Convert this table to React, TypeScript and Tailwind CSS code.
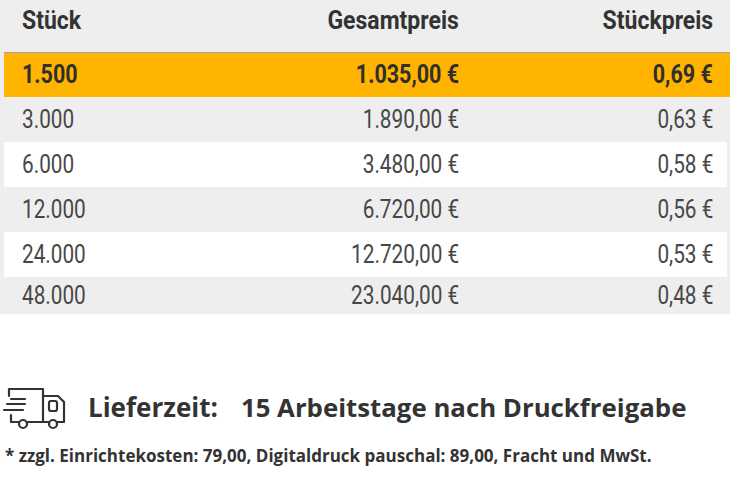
import React from 'react';

interface PriceRow {
  qty: string;
  total: string;
  unit: string;
}

const rows: PriceRow[] = [
  { qty: '1.500', total: '1.035,00 €', unit: '0,69 €' },
  { qty: '3.000', total: '1.890,00 €', unit: '0,63 €' },
  { qty: '6.000', total: '3.480,00 €', unit: '0,58 €' },
  { qty: '12.000', total: '6.720,00 €', unit: '0,56 €' },
  { qty: '24.000', total: '12.720,00 €', unit: '0,53 €' },
  { qty: '48.000', total: '23.040,00 €', unit: '0,48 €' },
];

const condensed = { fontFamily: 'Roboto, "Liberation Sans", sans-serif' };
const rounded = { fontFamily: '"Open Sans", "Noto Sans", sans-serif' };

function TruckIcon() {
  return (
    <svg width="66" height="46" viewBox="0 0 66 46" fill="none" stroke="#333" strokeWidth="2.2" strokeLinecap="round" strokeLinejoin="round">
      {/* cargo box */}
      <path d="M9 12V5h34v33" />
      {/* cab */}
      <path d="M43 12h15l6 6v20h-7" />
      <rect x="49" y="17" width="8" height="10" rx="2" />
      {/* bottom line between wheels */}
      <path d="M27 38h22" />
      <path d="M11 31v7h8" />
      {/* wheels */}
      <circle cx="23" cy="40" r="4" />
      <circle cx="53" cy="40" r="4" />
      {/* speed lines */}
      <path d="M11 15h14" />
      <path d="M7 20h18" />
      <path d="M4 26h19" />
    </svg>
  );
}

function Cell({ children, align, squeeze }: { children: React.ReactNode; align: 'left' | 'right'; squeeze: 'header' | 'bold' | 'normal' }) {
  const scale = squeeze === 'header' ? 'scale-x-[0.92]' : squeeze === 'bold' ? 'scale-x-[0.86]' : 'scale-x-[0.83]';
  return (
    <div className={align === 'left' ? 'text-left' : 'text-right'}>
      <span className={`inline-block whitespace-nowrap ${scale} ${align === 'left' ? 'origin-left' : 'origin-right'}`}>
        {children}
      </span>
    </div>
  );
}

export default function App() {
  return (
    <div className="w-[730px] h-[487px] overflow-hidden bg-white text-[#3a3a3a]">
      {/* Price table */}
      <div className="bg-[#eeeeee]">
        <div
          className="grid h-[52px] grid-cols-[200px_237px_254px] items-center pb-[10px] pl-[22px] text-[25px] font-bold text-[#333]"
          style={condensed}
        >
          <Cell align="left" squeeze="header">Stück</Cell>
          <Cell align="right" squeeze="header">Gesamtpreis</Cell>
          <Cell align="right" squeeze="header">Stückpreis</Cell>
        </div>

        {rows.map((row, index) => {
          const highlighted = index === 0;
          const bg = highlighted
            ? 'bg-[#ffb400] border-t border-[#9aa3ab] font-bold text-[#2f2f2f] mr-0'
            : index % 2 === 0
              ? 'bg-white text-[#474747] mr-[3px]'
              : 'bg-[#eeeeee] text-[#474747] mr-[3px]';
          const height = index === rows.length - 1 ? 'h-[37px] pb-[4px]' : 'h-[45px]';
          const squeeze = highlighted ? 'bold' : 'normal';
          return (
            <div
              key={row.qty}
              className={`ml-[4px] grid grid-cols-[200px_237px_254px] items-center pl-[18px] text-[25px] ${height} ${bg}`}
              style={condensed}
            >
              <Cell align="left" squeeze={squeeze}>{row.qty}</Cell>
              <Cell align="right" squeeze={squeeze}>{row.total}</Cell>
              <Cell align="right" squeeze={squeeze}>{row.unit}</Cell>
            </div>
          );
        })}
      </div>

      {/* Delivery info */}
      <div className="mt-[70px] flex h-[46px] items-center" style={rounded}>
        <TruckIcon />
        <span className="ml-[22px] text-[26px] font-bold text-[#333]">Lieferzeit:</span>
        <span className="ml-[23px] text-[25.8px] font-bold text-[#333]">15 Arbeitstage nach Druckfreigabe</span>
      </div>
      <p className="mt-[13px] pl-[5px] text-[17px] font-bold text-[#333]" style={rounded}>
        * zzgl. Einrichtekosten: 79,00, Digitaldruck pauschal: 89,00, Fracht und MwSt.
      </p>
    </div>
  );
}
